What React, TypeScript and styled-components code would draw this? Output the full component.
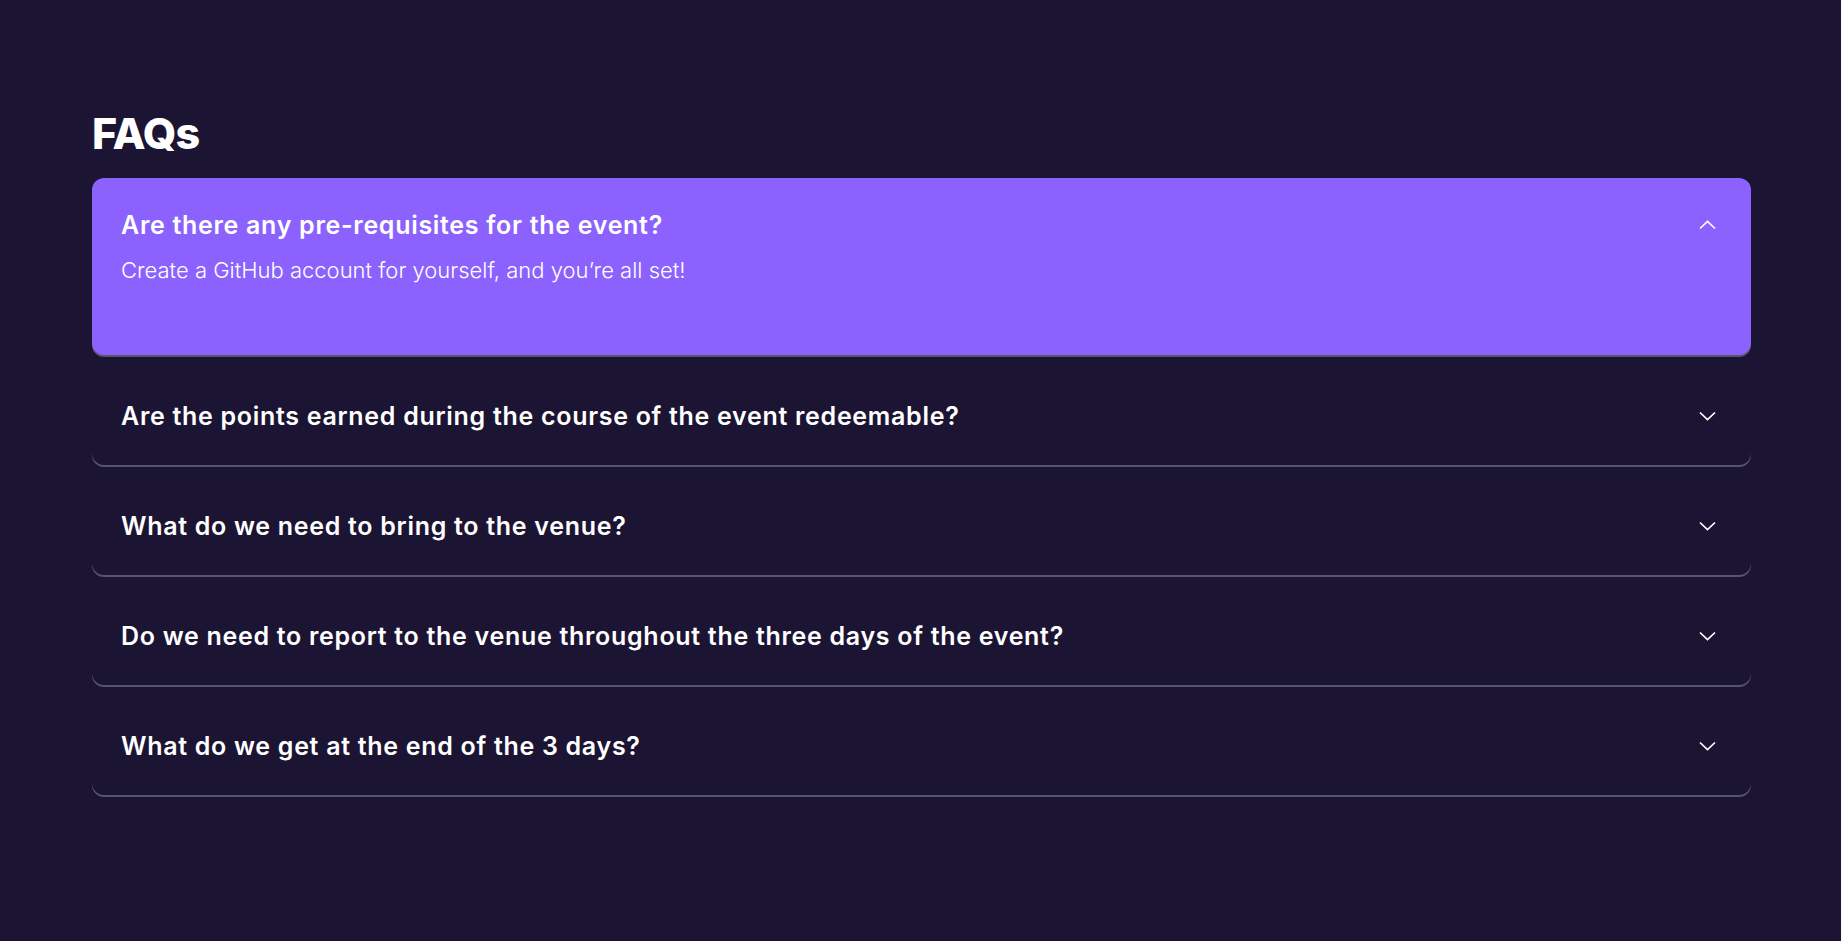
import styled, { createGlobalStyle } from 'styled-components';

interface FaqItem {
  question: string;
  answer: string;
}

const faqs: FaqItem[] = [
  {
    question: 'Are there any pre-requisites for the event?',
    answer: 'Create a GitHub account for yourself, and you\u2019re all set!',
  },
  {
    question: 'Are the points earned during the course of the event redeemable?',
    answer: '',
  },
  { question: 'What do we need to bring to the venue?', answer: '' },
  {
    question: 'Do we need to report to the venue throughout the three days of the event?',
    answer: '',
  },
  { question: 'What do we get at the end of the 3 days?', answer: '' },
];

const GlobalStyle = createGlobalStyle`
  html, body {
    margin: 0;
    padding: 0;
    background: #1c1433;
  }
  body {
    font-family: Inter, 'Noto Sans', 'Liberation Sans', sans-serif;
    color: #ffffff;
  }
`;

const Page = styled.main`
  min-height: 100vh;
  background: #1c1433;
`;

const Section = styled.section`
  padding: 107px 90px 0 92px;
`;

const Heading = styled.h2`
  margin: 0 0 19px 0;
  font-size: 43px;
  line-height: 52px;
  font-weight: 800;
  letter-spacing: -0.02em;
  color: #ffffff;
`;

const List = styled.div`
  display: flex;
  flex-direction: column;
  gap: 14px;
`;

const Card = styled.div<{ $open: boolean }>`
  background: ${(props) => (props.$open ? '#8b62fd' : '#1c1433')};
  border-radius: 12px;
  box-shadow: 0 2px 0 0 #56566a;
`;

const Header = styled.div<{ $open: boolean }>`
  display: flex;
  align-items: center;
  justify-content: space-between;
  padding: 31px 35px ${(props) => (props.$open ? '15px' : '33px')} 29px;
  cursor: pointer;
`;

const Question = styled.h3`
  margin: 0;
  font-size: 25px;
  line-height: 32px;
  font-weight: 600;
  letter-spacing: 0.028em;
  color: #ffffff;
`;

const Answer = styled.p`
  margin: 0;
  padding: 0 29px 71px 29px;
  font-size: 22px;
  line-height: 28px;
  font-weight: 300;
  letter-spacing: 0;
  color: #ffffff;
`;

const Chevron = styled.svg<{ $open: boolean }>`
  flex-shrink: 0;
  fill: none;
  stroke: #ffffff;
  stroke-width: 1.7px;
  transform: ${(props) => (props.$open ? 'rotate(180deg)' : 'none')};
`;

const App = () => {
  const openIndex = 0;

  return (
    <Page>
      <GlobalStyle />
      <Section>
        <Heading>FAQs</Heading>
        <List>
          {faqs.map((faq, i) => {
            const open = i === openIndex;
            return (
              <Card key={faq.question} $open={open}>
                <Header $open={open}>
                  <Question>{faq.question}</Question>
                  <Chevron $open={open} width='17' height='10' viewBox='0 0 17 10'>
                    <polyline points='1,1.5 8.5,8.5 16,1.5' />
                  </Chevron>
                </Header>
                {open && <Answer>{faq.answer}</Answer>}
              </Card>
            );
          })}
        </List>
      </Section>
    </Page>
  );
};

export default App;
